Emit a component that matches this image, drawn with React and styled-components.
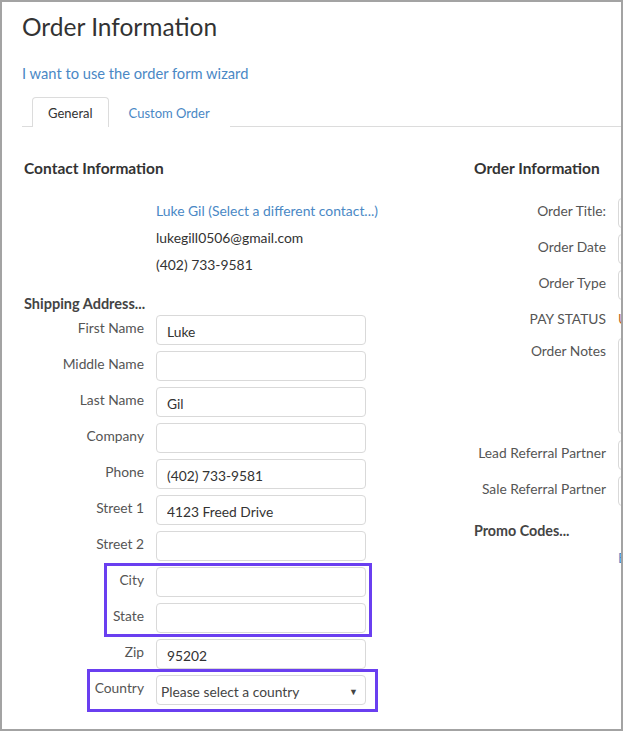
import styled, { createGlobalStyle } from "styled-components";

const GlobalStyle = createGlobalStyle`
  body {
    margin: 0;
    background: #ffffff;
    font-family: Lato, "Open Sans", sans-serif;
  }
`;

const shippingRows = [
  { label: "First Name", value: "Luke" },
  { label: "Middle Name", value: "" },
  { label: "Last Name", value: "Gil" },
  { label: "Company", value: "" },
  { label: "Phone", value: "(402) 733-9581" },
  { label: "Street 1", value: "4123 Freed Drive" },
  { label: "Street 2", value: "" },
];

export default function App() {
  return (
    <Frame>
      <GlobalStyle />
      <Title>Order Information</Title>
      <WizardLink href="#">I want to use the order form wizard</WizardLink>

      <TabBar>
        <Tab $active>General</Tab>
        <Tab>Custom Order</Tab>
      </TabBar>

      <Columns>
        <Left>
          <Heading>Contact Information</Heading>
          <ContactLines>
            <ContactLink href="#">Luke Gil (Select a different contact...)</ContactLink>
            <ContactText>lukegill0506@gmail.com</ContactText>
            <ContactText>(402) 733-9581</ContactText>
          </ContactLines>

          <SubHeading>Shipping Address...</SubHeading>
          <Rows>
            {shippingRows.map((row) => (
              <Row key={row.label}>
                <Label>{row.label}</Label>
                <Input defaultValue={row.value} />
              </Row>
            ))}
            <Highlight $top={4} $bottom={4} $left={80} $right={-6}>
              <Row>
                <Label>City</Label>
                <Input />
              </Row>
              <Row>
                <Label>State</Label>
                <Input />
              </Row>
            </Highlight>
            <Row>
              <Label>Zip</Label>
              <Input defaultValue="95202" />
            </Row>
            <Highlight $top={6} $bottom={7} $left={63} $right={-12}>
              <Row>
                <Label>Country</Label>
                <Select>
                  <span>Please select a country</span>
                  <Caret>▼</Caret>
                </Select>
              </Row>
            </Highlight>
          </Rows>
        </Left>

        <Right>
          <Heading>Order Information</Heading>
          <Rows $wide>
            <Row>
              <Label $wide>Order Title:</Label>
              <Input $wide />
            </Row>
            <Row>
              <Label $wide>Order Date</Label>
              <Input $wide />
            </Row>
            <Row>
              <Label $wide>Order Type</Label>
              <Input $wide />
            </Row>
            <StatusRow>
              <Label $wide>PAY STATUS</Label>
              <Status>UNPAID</Status>
            </StatusRow>
            <Row>
              <Label $wide>Order Notes</Label>
              <Notes />
            </Row>
            <Row>
              <Label $wide>Lead Referral Partner</Label>
              <Input $wide />
            </Row>
            <Row>
              <Label $wide>Sale Referral Partner</Label>
              <Input $wide />
            </Row>
          </Rows>
          <PromoHeading>Promo Codes...</PromoHeading>
          <PromoRow>
            <PromoLink href="#">Enter a promo code</PromoLink>
          </PromoRow>
        </Right>
      </Columns>
    </Frame>
  );
}

const Frame = styled.div`
  width: 623px;
  height: 731px;
  box-sizing: border-box;
  border: 2px solid #a3a3a3;
  overflow: hidden;
  background: #fff;
  padding-left: 20px;
  color: #333;
`;

const Title = styled.h1`
  margin: 0;
  padding-top: 10px;
  font-size: 24.5px;
  line-height: 30px;
  font-weight: 400;
  color: #333;
`;

const WizardLink = styled.a`
  display: block;
  margin-top: 22px;
  font-size: 14.7px;
  line-height: 18px;
  color: #4a88c5;
  text-decoration: none;
`;

const TabBar = styled.div`
  display: flex;
  margin-top: 15px;
  padding-left: 10px;
  border-bottom: 1px solid #dcdcdc;
  width: 700px;
`;

const Tab = styled.div`
  height: 30px;
  box-sizing: border-box;
  padding: 0 ${(p) => (p.$active ? "15px" : "19px")};
  display: flex;
  align-items: center;
  font-size: 13px;
  color: ${(p) => (p.$active ? "#333" : "#4a88c5")};
  border: 1px solid ${(p) => (p.$active ? "#dcdcdc" : "transparent")};
  border-bottom: none;
  border-radius: 4px 4px 0 0;
  background: #fff;
  margin-bottom: -1px;
`;

const Columns = styled.div`
  display: flex;
  padding-left: 2px;
  padding-top: 31px;
`;

const Left = styled.div`
  width: 450px;
  flex: none;
`;

const Right = styled.div`
  flex: none;
  width: 400px;
`;

const Heading = styled.h2`
  margin: 0;
  font-size: 15.5px;
  line-height: 20px;
  font-weight: 700;
  color: #333;
`;

const ContactLines = styled.div`
  display: flex;
  flex-direction: column;
  margin-top: 19px;
  padding-left: 132px;
  font-size: 13.9px;
  line-height: 27px;
`;

const ContactLink = styled.a`
  color: #4a88c5;
  text-decoration: none;
`;

const ContactText = styled.span`
  color: #333;
`;

const SubHeading = styled.div`
  margin-top: 17px;
  font-size: 14.5px;
  line-height: 18px;
  font-weight: 700;
  color: #444;
`;

const Rows = styled.div`
  display: flex;
  flex-direction: column;
  align-items: flex-start;
  gap: 6px;
  margin-top: ${(p) => (p.$wide ? "20px" : "2px")};
`;

const Row = styled.div`
  display: flex;
  align-items: flex-start;
  gap: 12px;
`;

const StatusRow = styled(Row)`
  height: 26px;
`;

const Label = styled.label`
  width: ${(p) => (p.$wide ? "132px" : "120px")};
  flex: none;
  text-align: right;
  padding-top: 5px;
  font-size: 13.8px;
  line-height: 16px;
  color: #555;
  white-space: nowrap;
`;

const Input = styled.input`
  width: ${(p) => (p.$wide ? "200px" : "210px")};
  height: 30px;
  box-sizing: border-box;
  border: 1px solid #d9d9d9;
  border-radius: 4px;
  padding: 3px 10px 0;
  font-family: inherit;
  font-size: 13.8px;
  color: #333;
  background: #fff;
  outline: none;
`;

const Notes = styled.div`
  width: 200px;
  height: 96px;
  box-sizing: border-box;
  border: 1px solid #d9d9d9;
  border-radius: 4px;
`;

const Select = styled.div`
  width: 210px;
  height: 30px;
  box-sizing: border-box;
  border: 1px solid #d9d9d9;
  border-radius: 4px;
  padding: 2px 7px 0 4px;
  display: flex;
  align-items: center;
  justify-content: space-between;
  font-size: 13.8px;
  color: #444;
`;

const Caret = styled.span`
  font-size: 9px;
  color: #444;
`;

const Highlight = styled.div`
  position: relative;
  display: flex;
  flex-direction: column;
  gap: 6px;

  &::after {
    content: "";
    position: absolute;
    top: ${(p) => -p.$top}px;
    bottom: ${(p) => -p.$bottom}px;
    left: ${(p) => p.$left}px;
    right: ${(p) => p.$right}px;
    border: 3px solid #6a3ff0;
    pointer-events: none;
  }
`;

const Status = styled.span`
  padding-top: 5px;
  font-size: 13.8px;
  line-height: 16px;
  color: #c0652b;
`;

const PromoHeading = styled.div`
  margin-top: 16px;
  font-size: 14.3px;
  line-height: 18px;
  font-weight: 700;
  color: #444;
`;

const PromoRow = styled.div`
  margin-top: 7px;
  padding-left: 144px;
`;

const PromoLink = styled.a`
  font-size: 13.8px;
  line-height: 16px;
  color: #4a88c5;
  text-decoration: none;
`;
